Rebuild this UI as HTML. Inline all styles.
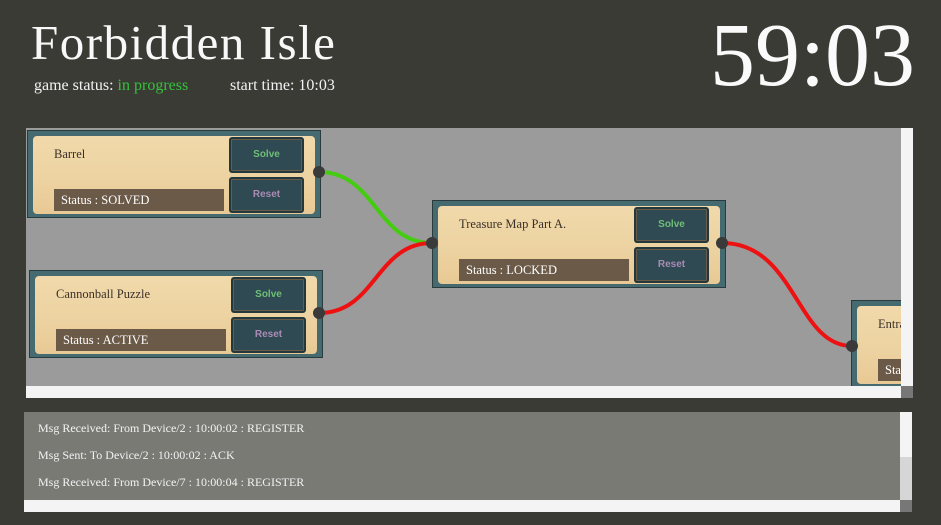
<!DOCTYPE html>
<html><head><meta charset="utf-8"><style>
*{margin:0;padding:0;box-sizing:border-box}
body{width:941px;height:525px;background:#3b3b36;position:relative;overflow:hidden;font-family:"Liberation Serif",serif;color:#fff}
.abs{position:absolute}
h1{position:absolute;left:31px;top:14px;font-size:49px;font-weight:normal;letter-spacing:1.5px;color:#f8f8f8}
.sub{position:absolute;top:77px;font-size:16px;color:#f2f2f2}
.clock{position:absolute;right:26px;top:4px;font-size:90px;color:#fafafa;font-weight:normal}
.canvas{position:absolute;left:26px;top:128px;width:875px;height:258px;background:#9b9b9b;overflow:hidden}
.node{position:absolute;width:294px;height:88px;background:#456a70;border:1px solid #2a3b3e}
.node .in{position:absolute;left:5px;top:5px;right:5px;bottom:3px;background:linear-gradient(180deg,#f1d9ab,#ecd2a0 60%,#e8c995);border-radius:4px}
.node .t{position:absolute;left:26px;top:16px;font-size:12.5px;color:#3a3028}
.node .st{position:absolute;left:26px;top:58px;width:170px;height:22px;background:#6c5a48;font-size:12.5px;padding:4px 0 0 7px;color:#fff}
.btn{position:absolute;left:201px;width:75px;height:36px;background:#2f4a52;border:2px solid #22383d;box-shadow:inset 0 0 0 1px #6a5a48;border-radius:3px;font-family:"Liberation Sans",sans-serif;font-weight:bold;font-size:10px;text-align:center;line-height:32px}
.b1{top:6px;color:#6fbf78}.b2{top:46px;color:#a98bb5}
.dot{position:absolute;width:12px;height:12px;border-radius:6px;background:#3a3a3a}
.log{position:absolute;left:24px;top:412px;width:876px;height:88px;background:#7a7a75;font-size:12px;color:#f2f2f2}
.log div{position:absolute;left:14px}
</style></head><body>
<h1>Forbidden Isle</h1>
<div class="sub" style="left:34px">game status: <span style="color:#35c23a">in progress</span></div>
<div class="sub" style="left:230px">start time: 10:03</div>
<div class="clock">59:03</div>

<div class="canvas">
<svg class="abs" style="left:0;top:0" width="875" height="258">
<path d="M293 44 C350 44,350 115,406 115" stroke="#44cc11" stroke-width="4" fill="none"/>
<path d="M293 185 C350 185,350 115,406 115" stroke="#ee1111" stroke-width="4" fill="none"/>
<path d="M696 115 C770 115,770 218,826 218" stroke="#ee1111" stroke-width="4" fill="none"/>
</svg>
<div class="node" style="left:1px;top:2px"><div class="in"></div><div class="t">Barrel</div><div class="st">Status : SOLVED</div><div class="btn b1">Solve</div><div class="btn b2">Reset</div></div>
<div class="node" style="left:3px;top:142px"><div class="in"></div><div class="t">Cannonball Puzzle</div><div class="st">Status : ACTIVE</div><div class="btn b1">Solve</div><div class="btn b2">Reset</div></div>
<div class="node" style="left:406px;top:72px"><div class="in"></div><div class="t">Treasure Map Part A.</div><div class="st">Status : LOCKED</div><div class="btn b1">Solve</div><div class="btn b2">Reset</div></div>
<div class="node" style="left:825px;top:172px"><div class="in"></div><div class="t">Entrance</div><div class="st">Status : LOCKED</div></div>
<div class="dot" style="left:287px;top:38px"></div>
<div class="dot" style="left:287px;top:179px"></div>
<div class="dot" style="left:400px;top:109px"></div>
<div class="dot" style="left:690px;top:109px"></div>
<div class="dot" style="left:820px;top:212px"></div>
</div>
<div class="abs" style="left:26px;top:386px;width:875px;height:12px;background:#f4f4f4"></div>
<div class="abs" style="left:901px;top:128px;width:12px;height:258px;background:#f4f4f4"></div>
<div class="abs" style="left:901px;top:386px;width:12px;height:12px;background:#777"></div>

<div class="log">
<div style="top:9px">Msg Received: From Device/2 : 10:00:02 : REGISTER</div>
<div style="top:36px">Msg Sent: To Device/2 : 10:00:02 : ACK</div>
<div style="top:63px">Msg Received: From Device/7 : 10:00:04 : REGISTER</div>
</div>
<div class="abs" style="left:24px;top:500px;width:876px;height:12px;background:#f4f4f4"></div>
<div class="abs" style="left:900px;top:412px;width:12px;height:45px;background:#f4f4f4"></div>
<div class="abs" style="left:900px;top:457px;width:12px;height:43px;background:#d6d6d6"></div>
<div class="abs" style="left:900px;top:500px;width:12px;height:12px;background:#777"></div>
</body></html>
